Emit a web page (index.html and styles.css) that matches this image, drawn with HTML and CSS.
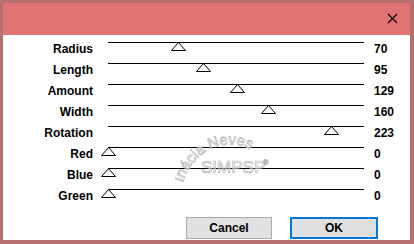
FILE: index.html
```html
<!DOCTYPE html>
<html lang="en">
<head>
    <meta charset="UTF-8">
    <meta name="viewport" content="width=device-width, initial-scale=1.0">
    <title>Settings</title>
    <link rel="stylesheet" href="styles.css">
</head>
<body>

<div class="window">
    <div class="titlebar">
        <button class="close" aria-label="Close">
            <svg width="11" height="11" viewBox="0 0 11 11">
                <path d="M1 1 L10 10 M10 1 L1 10" stroke="#000" stroke-width="1.1" fill="none"/>
            </svg>
        </button>
    </div>

    <div class="content">
        <div class="rows">
            <div class="row">
                <span class="label">Radius</span>
                <div class="track"><span class="thumb" style="left: 70px"></span></div>
                <span class="value">70</span>
            </div>
            <div class="row">
                <span class="label">Length</span>
                <div class="track"><span class="thumb" style="left: 95px"></span></div>
                <span class="value">95</span>
            </div>
            <div class="row">
                <span class="label">Amount</span>
                <div class="track"><span class="thumb" style="left: 129px"></span></div>
                <span class="value">129</span>
            </div>
            <div class="row">
                <span class="label">Width</span>
                <div class="track"><span class="thumb" style="left: 160px"></span></div>
                <span class="value">160</span>
            </div>
            <div class="row">
                <span class="label">Rotation</span>
                <div class="track"><span class="thumb" style="left: 223px"></span></div>
                <span class="value">223</span>
            </div>
            <div class="row">
                <span class="label">Red</span>
                <div class="track"><span class="thumb" style="left: 0px"></span></div>
                <span class="value">0</span>
            </div>
            <div class="row">
                <span class="label">Blue</span>
                <div class="track"><span class="thumb" style="left: 0px"></span></div>
                <span class="value">0</span>
            </div>
            <div class="row">
                <span class="label">Green</span>
                <div class="track"><span class="thumb" style="left: 0px"></span></div>
                <span class="value">0</span>
            </div>
        </div>

        <div class="buttons">
            <button class="btn">Cancel</button>
            <button class="btn btn-default">OK</button>
        </div>

        <!-- watermark stamped over the sliders -->
        <svg class="watermark" width="110" height="65" viewBox="0 0 110 65">
            <defs>
                <path id="arc" d="M8 58 C 18 22 62 2 96 40"/>
            </defs>
            <text class="wm-text" font-size="15"><textPath href="#arc">Inácia Neves</textPath></text>
            <text class="wm-text" x="26" y="48" font-size="17">SIMPSP</text>
            <text class="wm-text" x="88" y="40" font-size="7">®</text>
        </svg>
    </div>
</div>

</body>
</html>
```

FILE: styles.css
```css
body {
    margin: 0;
    font-family: "Liberation Sans", Arial, sans-serif;
    background-color: #b5706f;
}

.window {
    width: 407px;
    height: 237px;
    border-style: solid;
    border-color: #b5706f;
    border-width: 3px 4px 4px 3px;
    display: flex;
    flex-direction: column;
}

.titlebar {
    height: 32px;
    background-color: #e07373;
    display: flex;
    justify-content: flex-end;
    align-items: center;
}

.close {
    width: 30px;
    height: 30px;
    margin-right: 3px;
    margin-top: -1px;
    border: none;
    background: none;
    padding: 0;
    display: flex;
    align-items: center;
    justify-content: center;
}

.content {
    position: relative;
    flex: 1;
    background-color: #ffffff;
    padding-top: 7px;
}

.rows {
    display: flex;
    flex-direction: column;
}

.row {
    display: flex;
    height: 21px;
    font-size: 12px;
    font-weight: bold;
    color: #000;
}

.label {
    width: 90px;
    text-align: right;
    line-height: 14px;
}

.track {
    position: relative;
    width: 256px;
    height: 20px;
    margin-left: 15px;
    border-top: 1px solid #000;
}

.thumb {
    position: absolute;
    top: -1px;
    width: 15px;
    height: 9px;
    margin-left: -7px;
    background: url("data:image/svg+xml,%3Csvg xmlns='http://www.w3.org/2000/svg' width='15' height='9'%3E%3Cpolygon points='7.5,0.5 14.5,8.5 0.5,8.5' fill='white' stroke='black' stroke-width='1'/%3E%3C/svg%3E") no-repeat;
}

.value {
    margin-left: 10px;
    line-height: 14px;
}

.buttons {
    display: flex;
    justify-content: flex-end;
    gap: 18px;
    padding-right: 32px;
    margin-top: 7px;
}

.btn {
    font-family: "Liberation Sans", Arial, sans-serif;
    font-size: 12px;
    font-weight: bold;
    color: #000;
    width: 86px;
    height: 22px;
    padding: 0;
    background-color: #e1e1e1;
    border: 1px solid #adadad;
}

.btn-default {
    width: 88px;
    border: 2px solid #0078d7;
}

.watermark {
    position: absolute;
    left: 172px;
    top: 90px;
    pointer-events: none;
}

.wm-text {
    font-family: "Liberation Sans", Arial, sans-serif;
    fill: rgba(255, 255, 255, 0.5);
    stroke: #b4b4b4;
    stroke-width: 0.7;
}
```
